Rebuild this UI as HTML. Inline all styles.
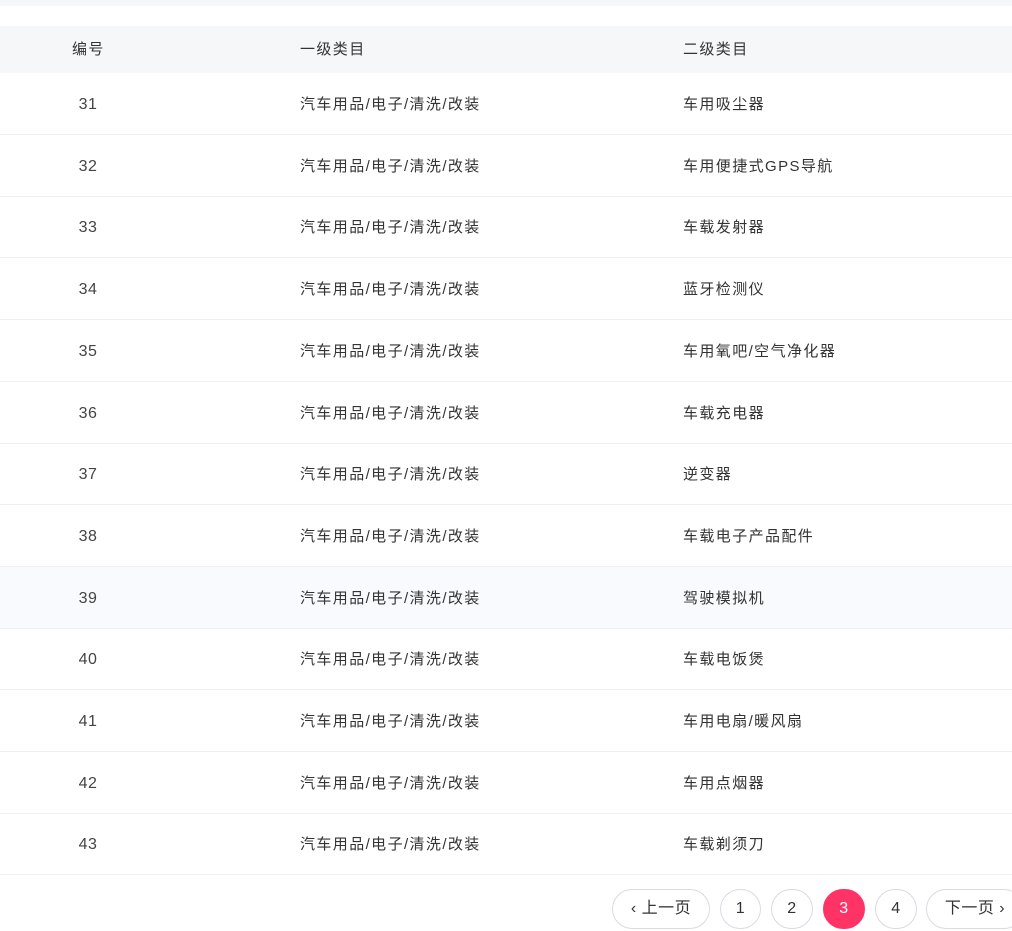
<!DOCTYPE html>
<html><head><meta charset="utf-8"><style>
body{margin:0;width:1012px;height:931px;overflow:hidden;background:#fff;font-family:"Liberation Sans","Noto Sans CJK SC",sans-serif;font-size:15px;letter-spacing:1.4px;color:#333}
.top{position:absolute;left:0;top:0;width:1012px;height:6px;background:#f5f6f9}
.hdr{position:absolute;left:0;top:26px;width:1012px;height:47px;background:#f5f7f9}
.row{position:absolute;left:0;width:1012px;height:61px;border-bottom:1px solid #eef0f3}
.c{position:absolute;line-height:20px}
.n{font-size:16px;letter-spacing:0.5px;color:#444}
.pg{position:absolute;top:889px;height:38px;border:1px solid #d8dbe2;border-radius:20px;line-height:38px;text-align:center;font-size:16px;letter-spacing:0.5px;color:#333;background:#fff}
</style></head><body>
<div class="top"></div>
<div class="hdr">
<div class="c" style="left:72px;top:14px">编号</div>
<div class="c" style="left:300px;top:14px">一级类目</div>
<div class="c" style="left:683px;top:14px">二级类目</div>
</div>
<div id="rows"></div>
<script>
var n=["车用吸尘器","车用便捷式GPS导航","车载发射器","蓝牙检测仪","车用氧吧/空气净化器","车载充电器","逆变器","车载电子产品配件","驾驶模拟机","车载电饭煲","车用电扇/暖风扇","车用点烟器","车载剃须刀"];
var h="";
for(var i=0;i<13;i++){var t=73+i*61.7;
h+='<div class="row" style="top:'+t+'px;'+(i==8?'background:#f8fafd;':'')+'"><div class="c n" style="left:0;width:176px;text-align:center;top:22px">'+(31+i)+'</div><div class="c" style="left:300px;top:22px">汽车用品/电子/清洗/改装</div><div class="c" style="left:683px;top:22px">'+n[i]+'</div></div>';}
document.getElementById("rows").innerHTML=h;
</script>
<div class="pg" style="left:612px;width:96px">‹ 上一页</div>
<div class="pg" style="left:720px;width:39px">1</div>
<div class="pg" style="left:771px;width:40px">2</div>
<div class="pg" style="left:823px;width:40px;background:#ff3366;border-color:#ff3366;color:#fff">3</div>
<div class="pg" style="left:875px;width:40px">4</div>
<div class="pg" style="left:926px;width:96px">下一页 ›</div>
</body></html>
